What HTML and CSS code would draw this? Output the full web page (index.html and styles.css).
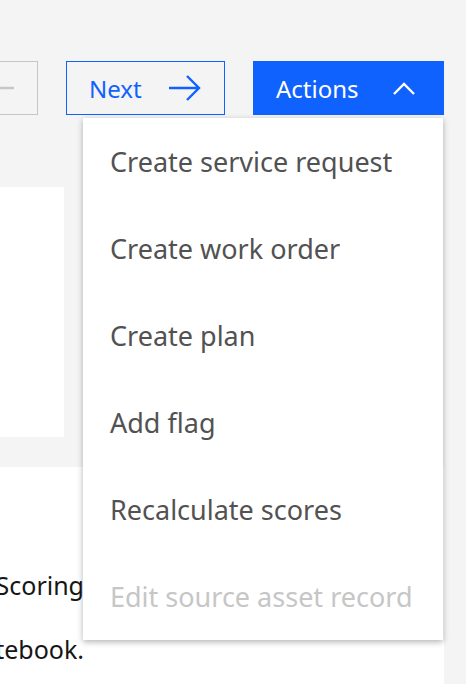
FILE: index.html
```html
<!DOCTYPE html>
<html lang="en">
<head>
<meta charset="utf-8">
<title>Actions menu</title>
<link rel="stylesheet" href="styles.css">
</head>
<body>
<div class="page">
  <div class="toolbar">
    <button class="btn btn-ghost-disabled" disabled>
      <span class="btn-label">Previous</span>
      <svg class="icon-arrow" width="32" height="26" viewBox="0 0 32 26" aria-hidden="true">
        <path d="M31 13H2M13 1L1 13l12 12" fill="none" stroke="currentColor" stroke-width="2.4"/>
      </svg>
    </button>
    <button class="btn btn-tertiary">
      <span class="btn-label">Next</span>
      <svg class="icon-arrow" width="32" height="26" viewBox="0 0 32 26" aria-hidden="true">
        <path d="M0 13h29M18 1l12 12-12 12" fill="none" stroke="currentColor" stroke-width="2.4"/>
      </svg>
    </button>
    <button class="btn btn-primary">
      <span class="btn-label">Actions</span>
      <svg class="icon-chevron" width="22" height="13" viewBox="0 0 22 13" aria-hidden="true">
        <path d="M1 12L11 2l10 10" fill="none" stroke="currentColor" stroke-width="2.4"/>
      </svg>
    </button>
  </div>

  <div class="card-row">
    <div class="card"></div>
  </div>

  <div class="panel">
    <p class="line"><span>the Asset Scoring</span></p>
    <p class="line"><span>in the notebook.</span></p>
  </div>
</div>

<ul class="menu" role="menu">
  <li class="menu-item">Create service request</li>
  <li class="menu-item">Create work order</li>
  <li class="menu-item">Create plan</li>
  <li class="menu-item">Add flag</li>
  <li class="menu-item">Recalculate scores</li>
  <li class="menu-item menu-item-disabled">Edit source asset record</li>
</ul>
</body>
</html>
```

FILE: styles.css
```css
* { box-sizing: border-box; }

html, body {
  margin: 0;
  height: 100%;
  overflow: hidden;
}

body {
  background: #f4f4f4;
  font-family: "Noto Sans", "Open Sans", sans-serif;
  color: #161616;
  position: relative;
}

.page {
  padding: 61px 22px 0 0;
  height: 100%;
  display: flex;
  flex-direction: column;
}

.toolbar {
  display: flex;
  justify-content: flex-end;
  gap: 28px;
  flex: none;
}

.btn {
  flex: none;
  height: 54px;
  display: flex;
  align-items: center;
  justify-content: space-between;
  padding: 0 23px 0 22px;
  font-family: inherit;
  font-size: 24px;
  border: 1px solid transparent;
  background: transparent;
  margin: 0;
}

.btn-ghost-disabled {
  width: 190px;
  border-color: #c6c6c6;
  color: #c6c6c6;
  padding-right: 22px;
}

.btn-tertiary {
  width: 159px;
  border-color: #0f62fe;
  color: #0f62fe;
}

.btn-primary {
  width: 191px;
  background: #0f62fe;
  border-color: #0f62fe;
  color: #ffffff;
  padding-right: 28px;
}

.icon-arrow, .icon-chevron { display: block; }

.card-row {
  margin-top: 72px;
  height: 250px;
  display: flex;
  flex: none;
}

.card {
  width: 64px;
  background: #ffffff;
}

.panel {
  margin-top: 30px;
  flex: 1;
  background: #ffffff;
  padding-top: 86px;
}

.line {
  margin: 0;
  width: 84px;
  display: flex;
  justify-content: flex-end;
  white-space: nowrap;
  font-size: 25px;
  line-height: 64px;
  color: #161616;
}

.menu {
  position: absolute;
  left: 83px;
  top: 118px;
  width: 360px;
  margin: 0;
  padding: 0;
  list-style: none;
  background: #ffffff;
  box-shadow: 0 2px 6px rgba(0, 0, 0, 0.3);
}

.menu-item {
  height: 87px;
  display: flex;
  align-items: center;
  padding-left: 27px;
  font-size: 27px;
  color: #525252;
  white-space: nowrap;
}

.menu-item-disabled {
  color: #c6c6c6;
}
```
